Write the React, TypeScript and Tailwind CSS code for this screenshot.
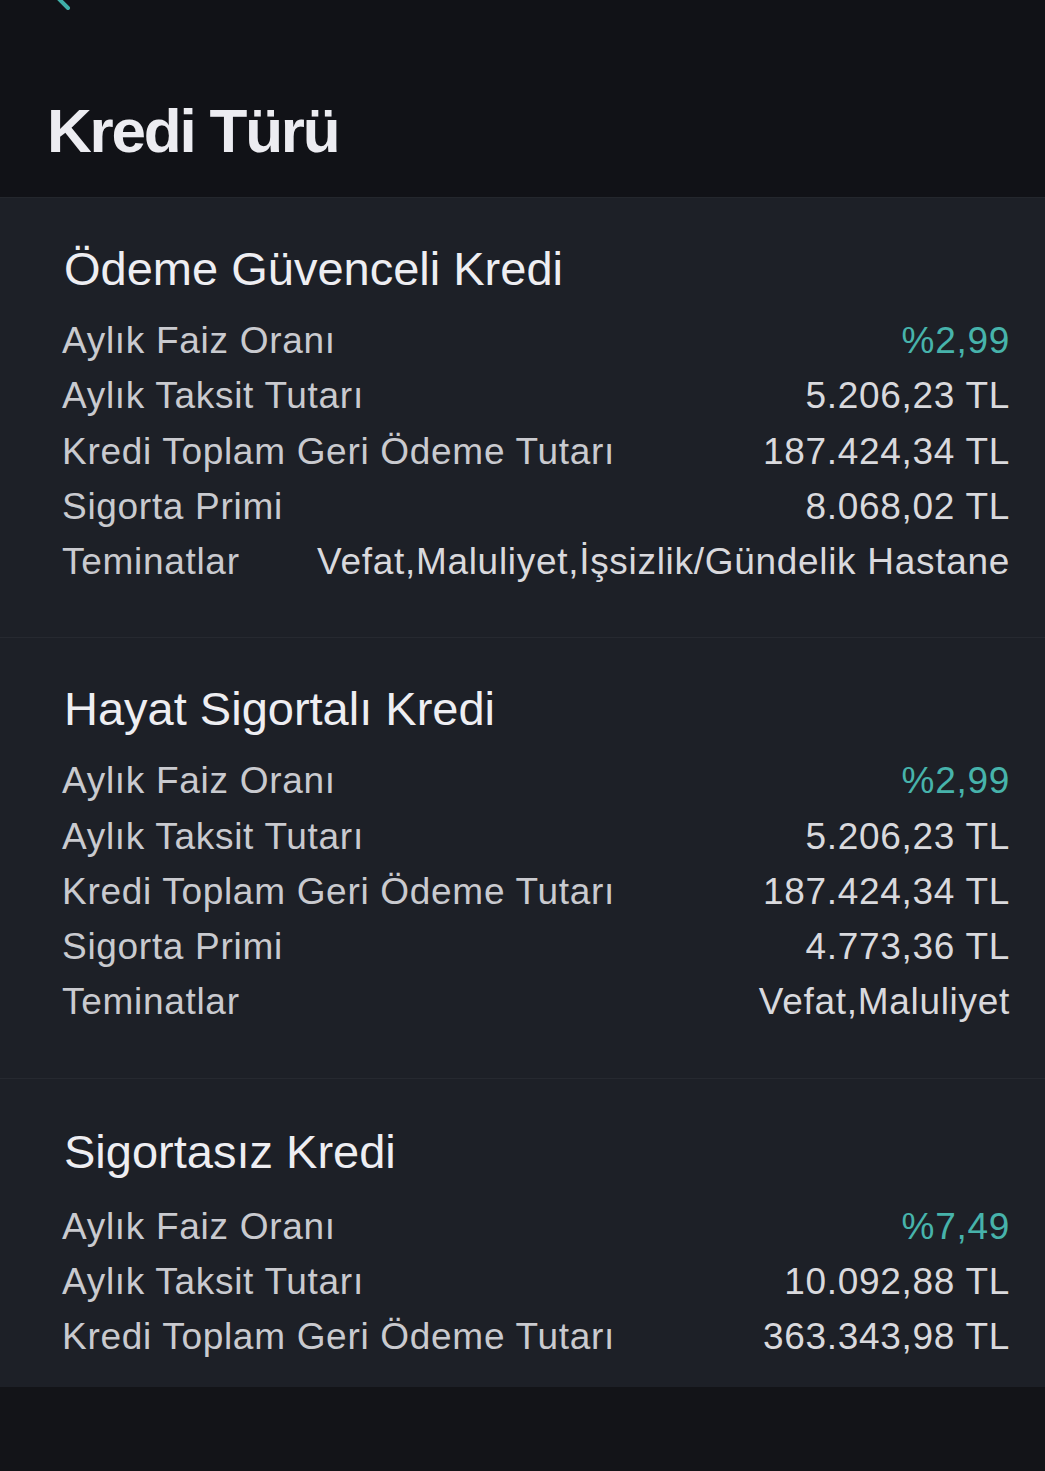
import React from "react";

type Row = { label: string; value: string; accent?: boolean };
type Section = { title: string; rows: Row[] };

const sections: Section[] = [
  {
    title: "Ödeme Güvenceli Kredi",
    rows: [
      { label: "Aylık Faiz Oranı", value: "%2,99", accent: true },
      { label: "Aylık Taksit Tutarı", value: "5.206,23 TL" },
      { label: "Kredi Toplam Geri Ödeme Tutarı", value: "187.424,34 TL" },
      { label: "Sigorta Primi", value: "8.068,02 TL" },
      { label: "Teminatlar", value: "Vefat,Maluliyet,İşsizlik/Gündelik Hastane" },
    ],
  },
  {
    title: "Hayat Sigortalı Kredi",
    rows: [
      { label: "Aylık Faiz Oranı", value: "%2,99", accent: true },
      { label: "Aylık Taksit Tutarı", value: "5.206,23 TL" },
      { label: "Kredi Toplam Geri Ödeme Tutarı", value: "187.424,34 TL" },
      { label: "Sigorta Primi", value: "4.773,36 TL" },
      { label: "Teminatlar", value: "Vefat,Maluliyet" },
    ],
  },
  {
    title: "Sigortasız Kredi",
    rows: [
      { label: "Aylık Faiz Oranı", value: "%7,49", accent: true },
      { label: "Aylık Taksit Tutarı", value: "10.092,88 TL" },
      { label: "Kredi Toplam Geri Ödeme Tutarı", value: "363.343,98 TL" },
    ],
  },
];

function SectionBlock({ s, last }: { s: Section; last: boolean }) {
  return (
    <div
      className={
        last
          ? "bg-[#1d2027] pt-[45px] pb-[23px]"
          : "bg-[#1d2027] pt-[42px] pb-[48px] border-b border-[#262930]"
      }
    >
      <div className="pl-[64px] pr-[36px] h-[56px] flex items-center text-[47px] tracking-[0px] text-[#eeeef2] leading-none">
        {s.title}
      </div>
      <div className={last ? "mt-[19px] pl-[62px] pr-[35px]" : "mt-[17px] pl-[62px] pr-[35px]"}>
        {s.rows.map((r, i) => (
          <div
            key={i}
            className="h-[55.25px] flex items-center justify-between gap-4 text-[37px] tracking-[0.7px] leading-none"
          >
            <span className="text-[#c9cacf] whitespace-nowrap">{r.label}</span>
            <span className={r.accent ? "text-[#47b3ab] whitespace-nowrap" : "text-[#d9d9dd] whitespace-nowrap"}>
              {r.value}
            </span>
          </div>
        ))}
      </div>
    </div>
  );
}

export default function App() {
  return (
    <div
      className="w-[1045px] min-h-[1471px] bg-[#131418] flex flex-col"
      style={{ fontFamily: '"Liberation Sans", Arial, sans-serif' }}
    >
      <div className="h-[197px] bg-[#111217] relative flex items-end pb-[35px] pl-[47px]">
        <svg className="absolute left-[52px] top-[-14px]" width="26" height="26" viewBox="0 0 26 26">
          <path d="M16 2 L6 12 L16 22" stroke="#3fb0a8" strokeWidth="4" fill="none" strokeLinecap="round" strokeLinejoin="round" />
        </svg>
        <h1 className="text-[62px] font-bold tracking-[-2.2px] text-[#ececf1] leading-none">Kredi Türü</h1>
      </div>
      <div className="h-px bg-[#24272d]" />
      {sections.map((s, i) => (
        <SectionBlock key={i} s={s} last={i === sections.length - 1} />
      ))}
      <div className="flex-1 bg-[#131418]" />
    </div>
  );
}
